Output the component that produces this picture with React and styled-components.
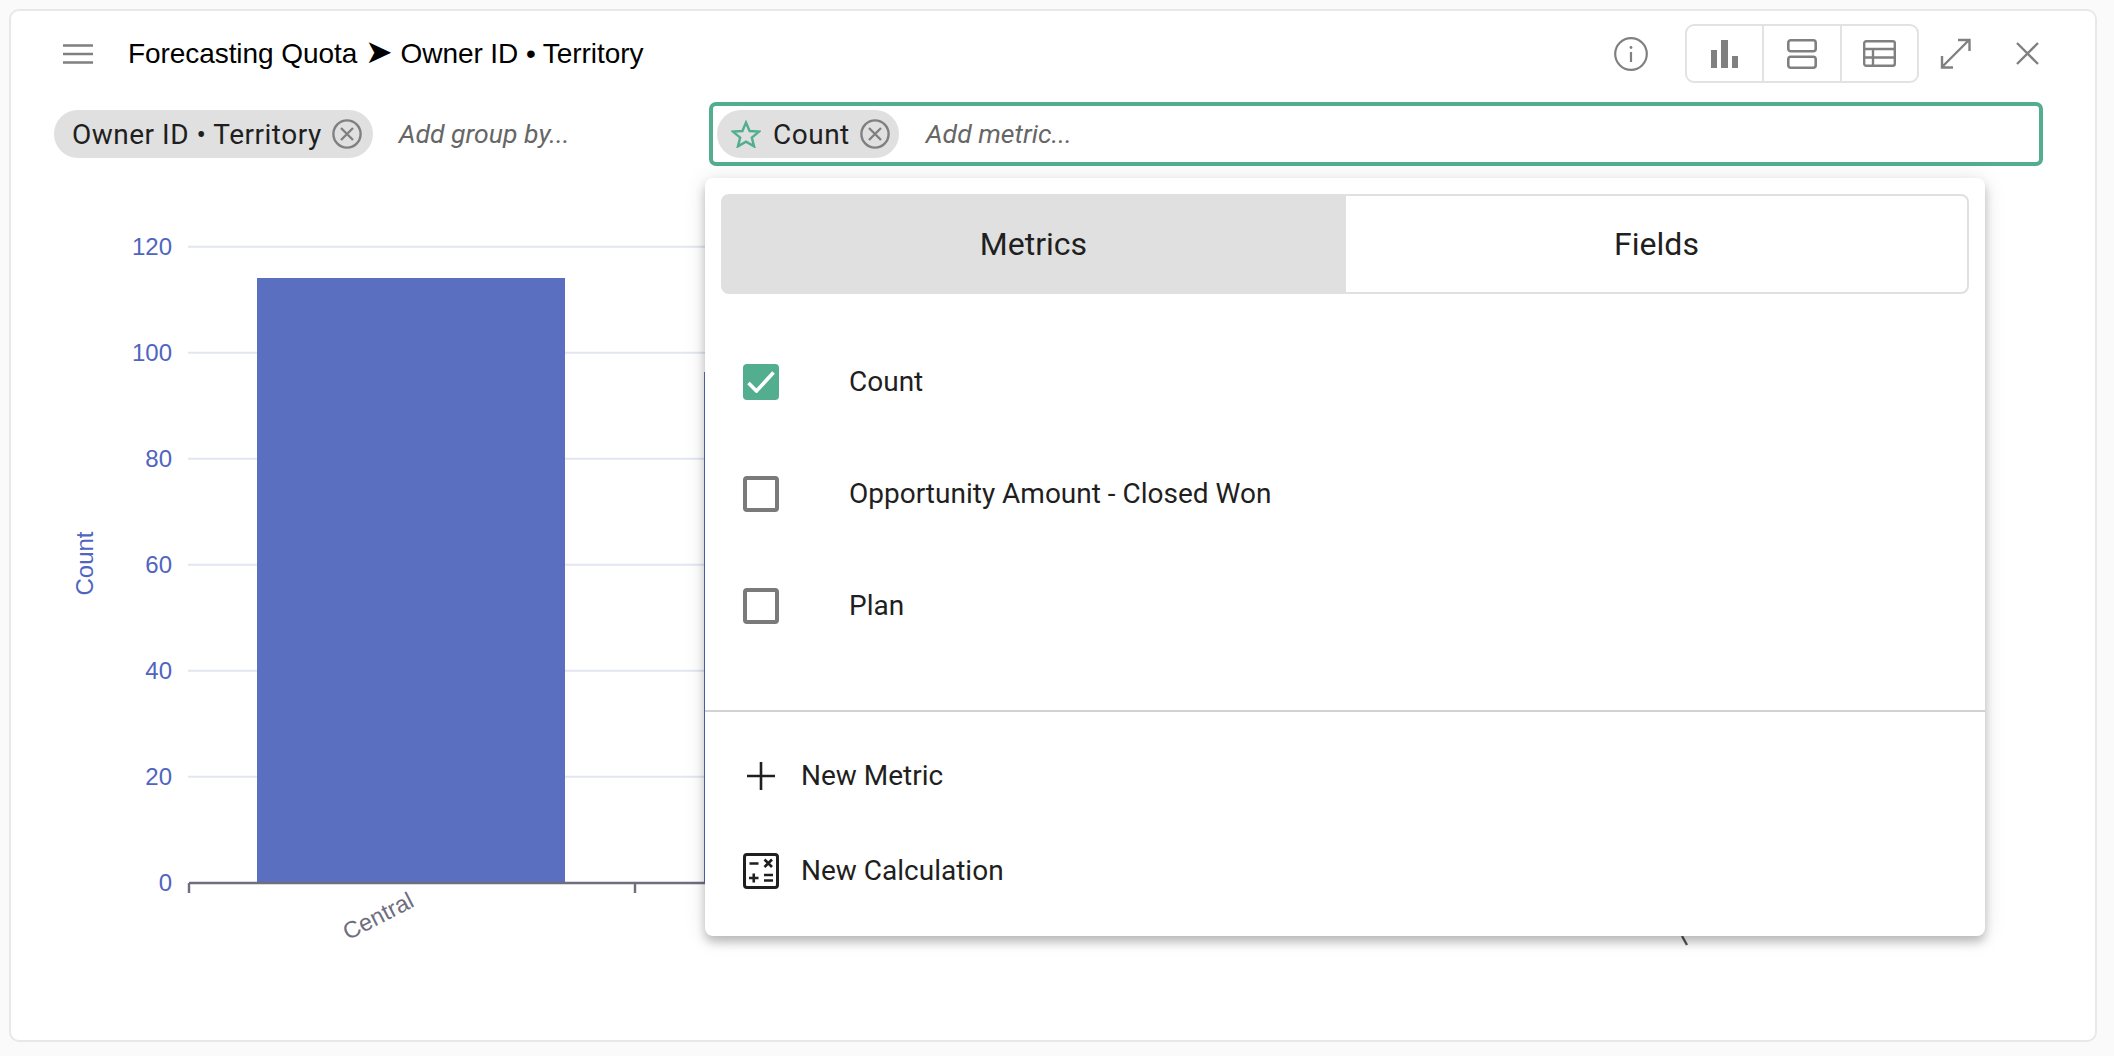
import React from "react";
import styled, { createGlobalStyle } from "styled-components";

const GREEN = "#52ae8f";
const GREY = "#808080";
const BLUE = "#4f65bf";

const GlobalStyle = createGlobalStyle`
  html, body { margin: 0; padding: 0; }
  body {
    background: #fafafa;
    font-family: Roboto, "Liberation Sans", sans-serif;
    color: #1f1f1f;
  }
`;

const Page = styled.div`
  box-sizing: border-box;
  width: 2114px;
  height: 1056px;
  padding: 9px 17px 14px 9px;
  overflow: hidden;
`;

const Card = styled.div`
  box-sizing: border-box;
  height: 100%;
  background: #fff;
  border: 2px solid #e8e8e8;
  border-radius: 10px;
  overflow: hidden;
`;

const Header = styled.header`
  display: flex;
  align-items: center;
  height: 59px;
  margin-top: 13px;
  padding: 0 56px 0 52px;
`;

const Title = styled.h1`
  margin: 0 0 0 35px;
  font-family: "Liberation Sans", Arial, sans-serif;
  font-size: 28px;
  line-height: 34px;
  font-weight: 400;
  letter-spacing: -0.07px;
  color: #000;
  white-space: nowrap;
`;

const TitleArrow = styled.span`
  font-size: 33px;
  line-height: 28px;
`;

const HeaderActions = styled.div`
  display: flex;
  align-items: center;
  margin-left: auto;
`;

const IconSlot = styled.span`
  display: flex;
  margin-left: ${(p) => p.$gap || 0}px;
`;

const ButtonGroup = styled.div`
  display: flex;
  box-sizing: border-box;
  width: 234px;
  height: 59px;
  margin-left: 37px;
  border: 2px solid #e2e2e2;
  border-radius: 9px;
`;

const GroupButton = styled.div`
  flex: 1;
  display: flex;
  align-items: center;
  justify-content: center;
  & + & {
    border-left: 2px solid #e2e2e2;
  }
`;

const FilterRow = styled.div`
  display: flex;
  height: 64px;
  margin-top: 19px;
  padding: 0 52px 0 43px;
`;

const GroupBy = styled.div`
  display: flex;
  align-items: center;
  width: 655px;
  flex: none;
`;

const MetricBox = styled.div`
  position: relative;
  flex: 1;
  display: flex;
  align-items: center;
  box-sizing: border-box;
  padding-left: 4px;
  border: 4px solid ${GREEN};
  border-radius: 7px;
`;

const Chip = styled.div`
  display: flex;
  align-items: center;
  box-sizing: border-box;
  height: 48px;
  padding: 0 ${(p) => p.$right}px 0 ${(p) => p.$left}px;
  background: #e0e0e0;
  border-radius: 24px;
  font-size: 28px;
  letter-spacing: 0.5px;
  white-space: nowrap;
`;

const ChipLabel = styled.span`
  margin: 0 10px 0 ${(p) => p.$left || 0}px;
`;

const Placeholder = styled.span`
  margin: 0 0 2px ${(p) => p.$left}px;
  font-size: 26.6px;
  font-style: italic;
  color: #666;
  white-space: nowrap;
`;

const Popup = styled.div`
  position: absolute;
  z-index: 2;
  left: -8px;
  top: 72px;
  box-sizing: border-box;
  width: 1280px;
  height: 758px;
  padding-top: 16px;
  background: #fff;
  border-radius: 8px;
  box-shadow: 0 6px 10px rgba(0, 0, 0, 0.22), 0 2px 22px rgba(0, 0, 0, 0.12);
`;

const Tabs = styled.div`
  display: flex;
  height: 100px;
  margin: 0 16px;
`;

const Tab = styled.div`
  flex: ${(p) => (p.$active ? "none" : 1)};
  width: ${(p) => (p.$active ? "625px" : "auto")};
  display: flex;
  align-items: center;
  justify-content: center;
  box-sizing: border-box;
  font-size: 32px;
  background: ${(p) => (p.$active ? "#e0e0e0" : "#fff")};
  border: ${(p) => (p.$active ? "none" : "2px solid #e0e0e0")};
  border-left: none;
  border-radius: ${(p) => (p.$active ? "8px 0 0 8px" : "0 8px 8px 0")};
`;

const OptionList = styled.div`
  padding: 32px 0 48px;
`;

const Option = styled.div`
  display: flex;
  align-items: center;
  height: 112px;
  padding-left: 38px;
  font-size: 28px;
`;

const OptionLabel = styled.span`
  margin-bottom: 2px;
`;

const Checkbox = styled.span`
  display: flex;
  align-items: center;
  justify-content: center;
  box-sizing: border-box;
  flex: none;
  width: 36px;
  height: 36px;
  margin-right: 70px;
  border-radius: 4px;
  background: ${(p) => (p.$checked ? GREEN : "#fff")};
  border: ${(p) => (p.$checked ? "none" : `4px solid #7a7a7a`)};
`;

const Divider = styled.div`
  height: 2px;
  background: #d2d2d2;
`;

const ActionList = styled.div`
  padding-top: 16px;
`;

const Action = styled.div`
  display: flex;
  align-items: center;
  height: 95px;
  padding-left: 38px;
  font-size: 28px;
`;

const ActionIcon = styled.span`
  display: flex;
  align-items: center;
  justify-content: center;
  width: 36px;
  margin-right: 22px;
`;

const ChartSvg = styled.svg`
  display: block;
`;

function ClearIcon() {
  return (
    <svg width="30" height="30" viewBox="0 0 30 30" fill="none" stroke={GREY} strokeWidth="2.4">
      <circle cx="15" cy="15" r="13.6" />
      <path d="M9 9 21 21M21 9 9 21" />
    </svg>
  );
}

function MenuIcon() {
  return (
    <svg width="30" height="20" viewBox="0 0 30 20" stroke={GREY} strokeWidth="2.4">
      <path d="M0 1.5H30M0 10H30M0 18.5H30" />
    </svg>
  );
}

function InfoIcon() {
  return (
    <svg width="34" height="34" viewBox="0 0 34 34" fill="none" stroke={GREY} strokeWidth="2.2">
      <circle cx="17" cy="17" r="15.8" />
      <path d="M17 15V25" />
      <circle cx="17" cy="10.5" r="1.4" fill={GREY} stroke="none" />
    </svg>
  );
}

function BarsIcon() {
  return (
    <svg width="27" height="28" viewBox="0 0 27 28" fill={GREY}>
      <rect x="0" y="10" width="6" height="18" />
      <rect x="10" y="0" width="7" height="28" />
      <rect x="21" y="16" width="6" height="12" />
    </svg>
  );
}

function SplitIcon() {
  return (
    <svg width="30" height="30" viewBox="0 0 30 30" fill="none" stroke={GREY} strokeWidth="2.6">
      <rect x="1.3" y="1.3" width="27.4" height="11" rx="2.5" />
      <rect x="1.3" y="17.7" width="27.4" height="11" rx="2.5" />
    </svg>
  );
}

function TableIcon() {
  return (
    <svg width="33" height="27" viewBox="0 0 33 27" fill="none" stroke={GREY} strokeWidth="2.4">
      <rect x="1.2" y="1.2" width="30.6" height="24.6" rx="2" />
      <path d="M1 9H32M1 17.5H32M10 9V26" />
    </svg>
  );
}

function ExpandIcon() {
  return (
    <svg width="31" height="31" viewBox="0 0 31 31" fill="none" stroke={GREY} strokeWidth="2.4">
      <path d="M2 29 29 2M18 2H29.5V13M2 18V29.5H13" />
    </svg>
  );
}

function CloseIcon() {
  return (
    <svg width="23" height="23" viewBox="0 0 23 23" fill="none" stroke={GREY} strokeWidth="2.4">
      <path d="M1 1 22 22M22 1 1 22" />
    </svg>
  );
}

function StarIcon() {
  return (
    <svg width="30" height="28" viewBox="0 0 30 28" fill="none" stroke={GREEN} strokeWidth="2.4" strokeLinejoin="miter">
      <path d="M15 2.5 18.6 11 28 11.6 20.8 17.6 23.1 26.4 15 21.6 6.9 26.4 9.2 17.6 2 11.6 11.4 11Z" />
    </svg>
  );
}

function CheckIcon() {
  return (
    <svg width="28" height="22" viewBox="0 0 28 22" fill="none" stroke="#fff" strokeWidth="3.6">
      <path d="M1.5 12 9.5 20 26.5 1.5" />
    </svg>
  );
}

function PlusIcon() {
  return (
    <svg width="30" height="30" viewBox="0 0 30 30" fill="none" stroke="#1f1f1f" strokeWidth="2.6">
      <path d="M15 1V29M1 15H29" />
    </svg>
  );
}

function CalculatorIcon() {
  return (
    <svg width="36" height="36" viewBox="0 0 36 36" fill="none" stroke="#1f1f1f" strokeWidth="2.6">
      <rect x="1.5" y="1.5" width="33" height="33" rx="2.5" strokeWidth="3" />
      <path d="M6.5 10.5H15.5M21.5 6.5 29 14M29 6.5 21.5 14M6 25H15.5M10.75 20.5V29.5M21 22H30M21 27.5H30" />
    </svg>
  );
}

const gridValues = [120, 100, 80, 60, 40, 20];

// viewBox is in page pixels, the svg starts right under the filter row
function Chart() {
  return (
    <ChartSvg width="2084" height="866" viewBox="11 166 2084 866">
      {gridValues.map((value, i) => (
        <line key={value} x1="188" x2="1000" y1={246.7 + i * 106} y2={246.7 + i * 106} stroke="#e2e5f2" strokeWidth="2" />
      ))}
      <rect x="257" y="278" width="308" height="605" fill="#5a6fbf" />
      <rect x="704" y="372" width="308" height="511" fill="#5a6fbf" />
      <path d="M189 883H1000M189 883V893M635 883V893" fill="none" stroke="#6e6e7e" strokeWidth="2.4" />
      {[...gridValues, 0].map((value, i) => (
        <text key={value} x="172" y={254.5 + i * 106} textAnchor="end" fontFamily="Liberation Sans" fontSize="24" fill={BLUE}>
          {value}
        </text>
      ))}
      <text transform="translate(93 563.5) rotate(-90)" textAnchor="middle" fontFamily="Liberation Sans" fontSize="24" fill={BLUE}>
        Count
      </text>
      <text transform="translate(415.5 906) rotate(-27)" textAnchor="end" fontFamily="Liberation Sans" fontSize="23.5" fill="#6e6e7e">
        Central
      </text>
      <path d="M1682 936 1687 945" stroke="#55555f" strokeWidth="2.4" />
    </ChartSvg>
  );
}

export default function App() {
  return (
    <Page>
      <GlobalStyle />
      <Card>
        <Header>
          <MenuIcon />
          <Title>Forecasting Quota <TitleArrow>➤</TitleArrow> Owner ID • Territory</Title>
          <HeaderActions>
            <InfoIcon />
            <ButtonGroup>
              <GroupButton><BarsIcon /></GroupButton>
              <GroupButton><SplitIcon /></GroupButton>
              <GroupButton><TableIcon /></GroupButton>
            </ButtonGroup>
            <IconSlot $gap={21}><ExpandIcon /></IconSlot>
            <IconSlot $gap={45}><CloseIcon /></IconSlot>
          </HeaderActions>
        </Header>

        <FilterRow>
          <GroupBy>
            <Chip $left={18} $right={11}>
              <ChipLabel>Owner ID • Territory</ChipLabel>
              <ClearIcon />
            </Chip>
            <Placeholder $left={26}>Add group by...</Placeholder>
          </GroupBy>

          <MetricBox>
            <Chip $left={14} $right={9}>
              <StarIcon />
              <ChipLabel $left={12}>Count</ChipLabel>
              <ClearIcon />
            </Chip>
            <Placeholder $left={27}>Add metric...</Placeholder>

            <Popup>
              <Tabs>
                <Tab $active>Metrics</Tab>
                <Tab>Fields</Tab>
              </Tabs>
              <OptionList>
                <Option><Checkbox $checked><CheckIcon /></Checkbox><OptionLabel>Count</OptionLabel></Option>
                <Option><Checkbox /><OptionLabel>Opportunity Amount - Closed Won</OptionLabel></Option>
                <Option><Checkbox /><OptionLabel>Plan</OptionLabel></Option>
              </OptionList>
              <Divider />
              <ActionList>
                <Action>
                  <ActionIcon><PlusIcon /></ActionIcon>
                  New Metric
                </Action>
                <Action>
                  <ActionIcon><CalculatorIcon /></ActionIcon>
                  New Calculation
                </Action>
              </ActionList>
            </Popup>
          </MetricBox>
        </FilterRow>

        <Chart />
      </Card>
    </Page>
  );
}
